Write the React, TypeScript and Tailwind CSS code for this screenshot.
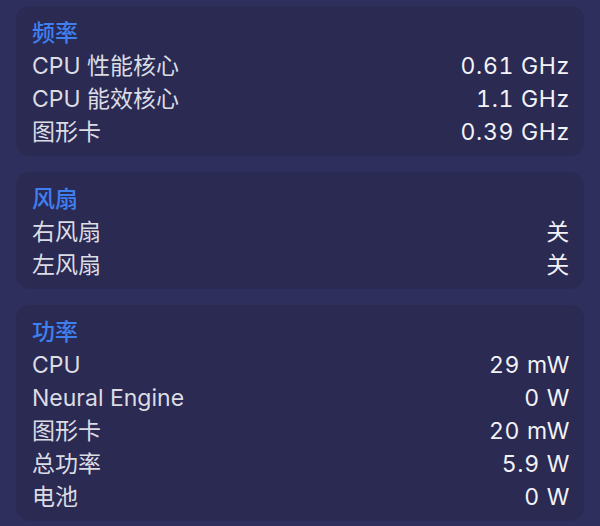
const sections = [
  {
    title: '频率',
    rows: [
      ['CPU 性能核心', '0.61 GHz'],
      ['CPU 能效核心', '1.1 GHz'],
      ['图形卡', '0.39 GHz'],
    ],
  },
  {
    title: '风扇',
    rows: [
      ['右风扇', '关'],
      ['左风扇', '关'],
    ],
  },
  {
    title: '功率',
    rows: [
      ['CPU', '29 mW'],
      ['Neural Engine', '0 W'],
      ['图形卡', '20 mW'],
      ['总功率', '5.9 W'],
      ['电池', '0 W'],
    ],
  },
]

export default function App() {
  return (
    <div
      className="w-[600px] h-[526px] overflow-hidden bg-[#2f2f5e] px-4 pt-[6px] flex flex-col gap-4 text-[23px] leading-[33px]"
      style={{ fontFamily: 'Inter, "Noto Sans CJK SC", sans-serif' }}
    >
      {sections.map((s) => (
        <div key={s.title} className="bg-[#2a2a52] rounded-[14px] pl-[16px] pr-[14px] pt-[11px] pb-[7px]">
          <div className="text-[#3f7ff0] font-medium">{s.title}</div>
          {s.rows.map(([label, value]) => (
            <div key={label} className="flex justify-between">
              <span className="text-[#dcdce4]">{label}</span>
              <span className="text-[#f2f2f7] tabular-nums tracking-[0.03em]">{value}</span>
            </div>
          ))}
        </div>
      ))}
    </div>
  )
}
